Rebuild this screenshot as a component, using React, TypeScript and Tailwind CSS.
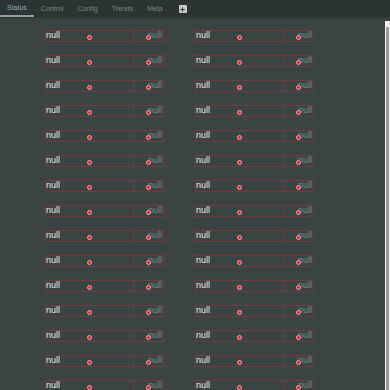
import { Plus } from "lucide-react";

const tabs = ["Status", "Control", "Config", "Trends", "Meta"];
const rows = Array.from({ length: 15 }, (_, i) => i);

function Dot() {
  return <span className="block h-[5px] w-[5px] rounded-full border border-[#f0a9ab] bg-[#e0262c]" />;
}

function Gauge() {
  return (
    <div className="flex h-[12px] w-[119px] border border-[#763a3c]">
      <div className="relative flex w-[88px] items-end justify-center border-r border-[#763a3c] pb-[1px]">
        <span className="absolute left-0 top-[-2px] text-[9px] leading-[12px] text-[#e9ecea]">null</span>
        <Dot />
      </div>
      <div className="relative flex flex-1 items-end justify-center pb-[1px]">
        <span className="absolute right-[1px] top-[-2px] text-[9px] leading-[12px] text-[#6f918b]">null</span>
        <span className="relative">
          <Dot />
        </span>
      </div>
    </div>
  );
}

export default function App() {
  return (
    <div className="flex h-[390px] w-[390px] flex-col overflow-hidden bg-[#3a4443] font-['Liberation_Sans',Arial,sans-serif]">
      <div className="flex h-[19px] shrink-0 items-stretch border-b-2 border-[#343c3b] bg-[#2c3433]">
        {tabs.map((t, i) => (
          <div
            key={t}
            className={
              i === 0
                ? "flex items-center border-b-2 border-[#8e9f9c] px-[7px] pt-[2px] text-[7px] text-[#86b0b6]"
                : "flex items-center px-[7px] pt-[2px] text-[7px] text-[#7b8785]"
            }
          >
            {t}
          </div>
        ))}
        <div className="ml-[9px] flex items-center pt-[1px]">
          <span className="flex h-[8px] w-[8px] items-center justify-center rounded-[1px] bg-[#c6cccb]">
            <Plus size={7} strokeWidth={3} className="text-[#2c3433]" />
          </span>
        </div>
      </div>
      <div className="flex flex-1">
        <div className="flex-1 pl-[45px] pt-[11px]">
          <div className="grid grid-cols-[150px_119px] gap-y-[13px]">
            {rows.map((r) => [<Gauge key={"a" + r} />, <Gauge key={"b" + r} />])}
          </div>
        </div>
        <div className="mt-[2px] flex w-[5px] flex-col bg-[#f2f2f2]">
          <div className="h-[6px]" />
          <div className="mx-[1px] flex-1 bg-[#9a9a9a]" />
        </div>
      </div>
    </div>
  );
}
